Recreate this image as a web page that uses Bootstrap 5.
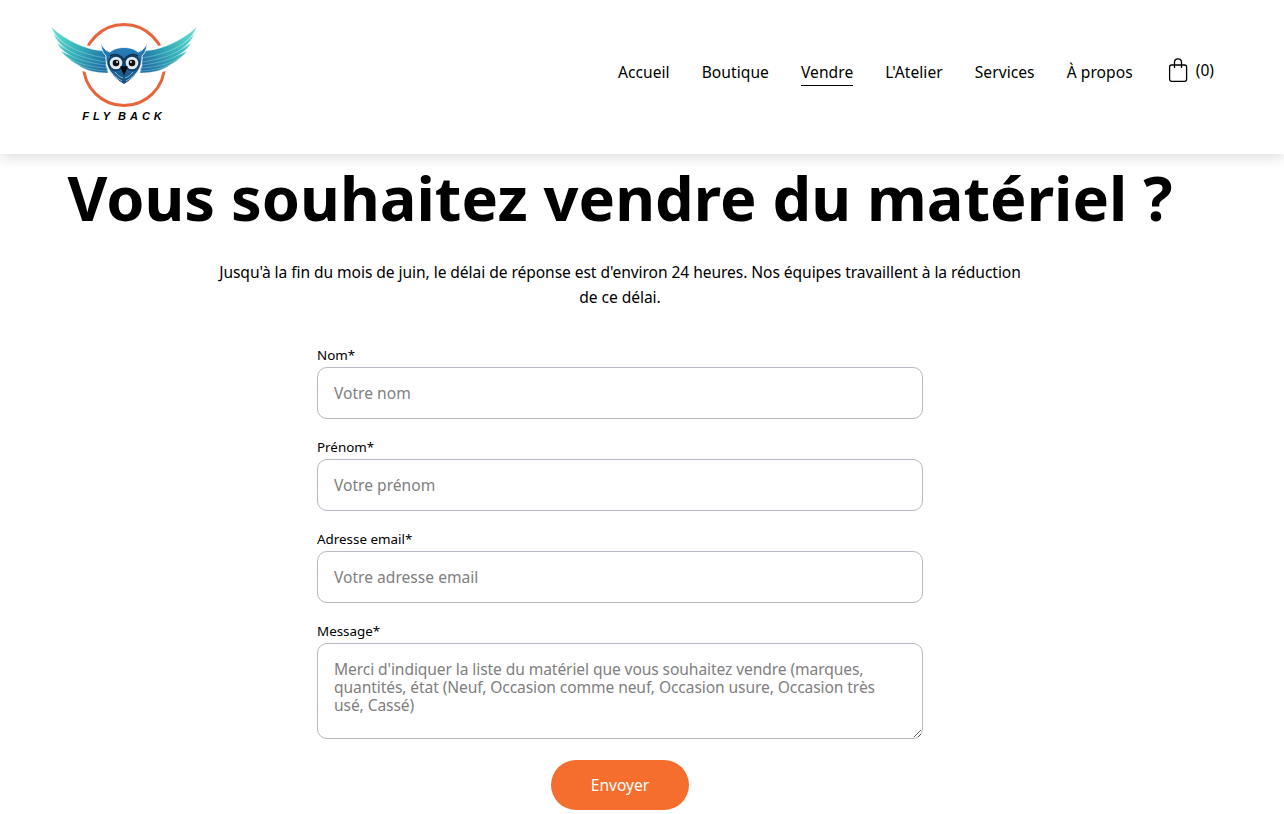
<!DOCTYPE html>
<html lang="fr">
<head>
    <meta charset="UTF-8">
    <meta name="viewport" content="width=device-width, initial-scale=1.0">
    <title>Vendre - Fly Back</title>
    <link href="https://cdn.jsdelivr.net/npm/bootstrap@5.3.0/dist/css/bootstrap.min.css" rel="stylesheet">
    <style>
        body {
            font-family: "Noto Sans", "Open Sans", sans-serif;
            color: #000;
            background: #fff;
            overflow: hidden;
        }
        .site-header {
            height: 154px;
            padding: 0 70px 0 50px;
            background: #fff;
            box-shadow: 0 2px 14px rgba(0, 0, 0, 0.16);
        }
        .brand-logo {
            width: 148px;
            height: 110px;
            margin-top: 20px;
            display: block;
        }
        .brand-name {
            font-family: "Liberation Sans", sans-serif;
            font-size: 11px;
            font-weight: 700;
            font-style: italic;
            letter-spacing: 4px;
            word-spacing: -3px;
        }
        .main-nav {
            margin-bottom: 8px;
        }
        .main-links {
            gap: 32px;
        }
        .main-links a {
            color: #000;
            font-size: 15.6px;
            line-height: 24px;
            letter-spacing: 0.05px;
            padding-bottom: 1px;
            text-decoration: none;
            border-bottom: 1px solid transparent;
        }
        .main-links a.current {
            border-bottom-color: #000;
        }
        .cart-link {
            color: #000;
            font-size: 15.6px;
            text-decoration: none;
            margin-left: 35px;
            gap: 8px;
            margin-top: -6px;
        }
        .cart-count {
            padding-top: 2px;
        }
        .page-wrap {
            width: 1240px;
        }
        .page-title {
            font-size: 61.3px;
            font-weight: 700;
            line-height: 80px;
            margin: 3px 0 0;
            white-space: nowrap;
        }
        .intro-text {
            width: 806px;
            margin: 23px auto 0;
            font-size: 15.6px;
            letter-spacing: -0.07px;
            line-height: 25px;
            text-align: center;
        }
        .sell-form {
            width: 606px;
            margin: 35px auto 0;
        }
        .field-label {
            display: block;
            font-size: 13.4px;
            line-height: 20px;
            margin-bottom: 2px;
        }
        .sell-form .form-control {
            height: 52px;
            padding: 0 16px;
            border: 1px solid #b4b9c2;
            border-radius: 10px;
            font-size: 15.6px;
            margin-bottom: 18px;
            color: #000;
        }
        .sell-form textarea.form-control {
            height: 96px;
            padding: 16px 16px 0;
            line-height: 18px;
            letter-spacing: -0.1px;
            margin-bottom: 21px;
        }
        .sell-form .form-control::placeholder {
            color: #808080;
            opacity: 1;
        }
        .send-btn {
            width: 138px;
            height: 50px;
            padding-top: 8px;
            background: #f56e2d;
            border: 0;
            border-radius: 25px;
            color: #fff;
            font-size: 15.6px;
        }
    </style>
</head>
<body>
    <!-- Header -->
    <header class="site-header d-flex justify-content-between align-items-center">
        <a href="#" class="align-self-start">
            <svg class="brand-logo" viewBox="0 0 148 110" xmlns="http://www.w3.org/2000/svg">
                <defs>
                    <linearGradient id="wingFill" gradientUnits="userSpaceOnUse" x1="2" y1="8" x2="58" y2="44">
                        <stop offset="0" stop-color="#6ae3d2"/>
                        <stop offset="0.5" stop-color="#35afb9"/>
                        <stop offset="1" stop-color="#1c6aa4"/>
                    </linearGradient>
                    <linearGradient id="headFill" x1="0" y1="0" x2="0" y2="1">
                        <stop offset="0" stop-color="#2b86c4"/>
                        <stop offset="1" stop-color="#14507f"/>
                    </linearGradient>
                    <g id="wingShape">
                        <path d="M57 47C46 47 36 47 28 45C34 50 46 53 58 53Z"/>
                        <path d="M56 44C42 44 30 43 18 38C25 45 38 50 57 51Z"/>
                        <path d="M56 41C40 41 24 38 11 31C17 40 32 46 56 48Z"/>
                        <path d="M56 38C38 38 20 33 7 23C12 33 28 42 56 45Z"/>
                        <path d="M56 35C38 35 16 28 4 14C8 27 26 38 56 42Z"/>
                        <path d="M56 31C38 31 16 21 1.700 7.300C6 21 24 33 56 38Z"/>
                    </g>
                </defs>
                <circle cx="74" cy="45" r="40.5" fill="none" stroke="#e8643a" stroke-width="3"/>
                <!-- white halo so the ring breaks around the wings -->
                <g fill="#fff" stroke="#fff" stroke-width="5">
                    <use href="#wingShape"/>
                    <use href="#wingShape" transform="translate(148 0) scale(-1 1)"/>
                </g>
                <g fill="url(#wingFill)" stroke="#dff8f4" stroke-width="0.3">
                    <use href="#wingShape"/>
                    <use href="#wingShape" transform="translate(148 0) scale(-1 1)"/>
                </g>
                <!-- owl head -->
                <path d="M51 22.500C53 28 56 31 60 32C64 28.500 69 27.500 74 27.500C79 27.500 84 28.500 88 32C92 31 95 28 97 22.500C97 29 95 33 92 36C93 47 85 58 74 64.500C63 58 55 47 56 36C53 33 51 29 51 22.500Z" fill="url(#headFill)" stroke="#fff" stroke-width="0.8"/>
                <g fill="none" stroke="#bfe3ee" stroke-width="0.7">
                    <path d="M60 51C63 55 67 58 72 61"/>
                    <path d="M88 51C85 55 81 58 76 61"/>
                    <path d="M65 52C67 55 70 57 73 58"/>
                    <path d="M83 52C81 55 78 57 75 58"/>
                </g>
                <path d="M60 36C65 33 71 35 74 40C77 35 83 33 88 36" fill="none" stroke="#0f2f50" stroke-width="1.6"/>
                <circle cx="66" cy="43" r="8" fill="#123a5e"/>
                <circle cx="82" cy="43" r="8" fill="#123a5e"/>
                <circle cx="66" cy="43" r="6.300" fill="#dfeaf0"/>
                <circle cx="82" cy="43" r="6.300" fill="#dfeaf0"/>
                <circle cx="66" cy="43" r="3.300" fill="#111"/>
                <circle cx="82" cy="43" r="3.300" fill="#111"/>
                <circle cx="67" cy="42" r="0.900" fill="#fff"/>
                <circle cx="81" cy="42" r="0.900" fill="#fff"/>
                <path d="M70 46.500C72 46 76 46 78 46.500L74 55.500Z" fill="#0b0b0b"/>
                <text x="74" y="100" text-anchor="middle" class="brand-name">FLY BACK</text>
            </svg>
        </a>
        <nav class="main-nav d-flex align-items-center">
            <div class="main-links d-flex align-items-center">
                <a href="#">Accueil</a>
                <a href="#">Boutique</a>
                <a href="#" class="current">Vendre</a>
                <a href="#">L'Atelier</a>
                <a href="#">Services</a>
                <a href="#">À propos</a>
            </div>
            <a href="#" class="cart-link d-flex align-items-center">
                <svg width="20" height="24" viewBox="0 0 20 24" xmlns="http://www.w3.org/2000/svg" fill="none" stroke="#000" stroke-width="1.3">
                    <rect x="1.600" y="7" width="17" height="16.300" rx="2"/>
                    <path d="M6.500 10V4C6.500 2 8 0.800 10 0.800S13.500 2 13.500 4V10"/>
                </svg>
                <span class="cart-count">(0)</span>
            </a>
        </nav>
    </header>

    <!-- Sell form -->
    <main class="page-wrap">
        <h1 class="page-title text-center">Vous souhaitez vendre du matériel ?</h1>
        <p class="intro-text">Jusqu'à la fin du mois de juin, le délai de réponse est d'environ 24 heures. Nos équipes travaillent à la réduction de ce délai.</p>
        <form class="sell-form text-center">
            <div class="text-start">
                <label class="field-label" for="nom">Nom*</label>
                <input class="form-control" id="nom" type="text" placeholder="Votre nom">
                <label class="field-label" for="prenom">Prénom*</label>
                <input class="form-control" id="prenom" type="text" placeholder="Votre prénom">
                <label class="field-label" for="email">Adresse email*</label>
                <input class="form-control" id="email" type="email" placeholder="Votre adresse email">
                <label class="field-label" for="message">Message*</label>
                <textarea class="form-control" id="message" placeholder="Merci d'indiquer la liste du matériel que vous souhaitez vendre (marques, quantités, état (Neuf, Occasion comme neuf, Occasion usure, Occasion très usé, Cassé)"></textarea>
            </div>
            <button type="button" class="btn send-btn">Envoyer</button>
        </form>
    </main>

    <script src="https://cdn.jsdelivr.net/npm/bootstrap@5.3.0/dist/js/bootstrap.bundle.min.js"></script>
</body>
</html>
